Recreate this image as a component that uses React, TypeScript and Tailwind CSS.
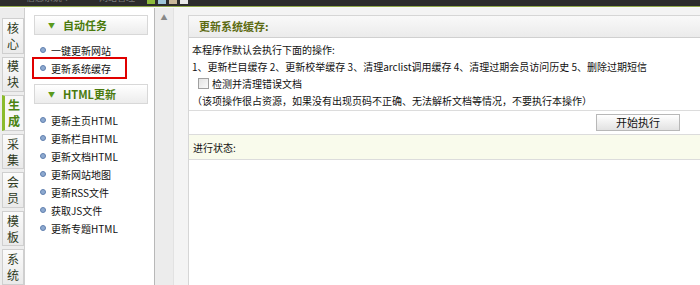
import React from "react";

const tabs = [
  { t: "核心", active: false },
  { t: "模块", active: false },
  { t: "生成", active: true },
  { t: "采集", active: false },
  { t: "会员", active: false },
  { t: "模板", active: false },
  { t: "系统", active: false },
];

function Bullet() {
  return (
    <span className="inline-block w-[6px] h-[6px] rounded-full bg-[#8eaad0] border border-[#5f7fae] mr-[5px] shrink-0" />
  );
}

function Header({ text }: { text: string }) {
  return (
    <div className="ml-[9px] w-[114px] h-[20px] border border-[#d8d8d8] bg-gradient-to-b from-[#ffffff] to-[#ececec] flex items-center">
      <span className="ml-[13px] text-[7px] text-[#5b9a1c] leading-none">▼</span>
      <span className="ml-[8px] font-bold text-[11px] text-[#4a7a0c]">{text}</span>
    </div>
  );
}

function Item({ text, boxed }: { text: string; boxed?: boolean }) {
  return (
    <div className="h-[18px] flex items-center pl-[15px] relative">
      <Bullet />
      <span className="text-[10px] text-[#111]">{text}</span>
      {boxed && (
        <div className="absolute left-[7px] top-[-2px] w-[95px] h-[22px] border-2 border-[#e00000]" />
      )}
    </div>
  );
}

export default function App() {
  return (
    <div
      className="w-[700px] h-[285px] overflow-hidden bg-[#f4f4f4] flex flex-col"
      style={{ fontFamily: '"Noto Sans CJK SC", "Liberation Sans", sans-serif' }}
    >
      {/* top bar */}
      <div className="h-[6px] bg-[#2c2c2c] relative overflow-hidden shrink-0">
        <div className="absolute left-[26px] top-[-7px] flex gap-[28px] text-[9px] leading-[10px] text-[#7a7a7a]">
          <span>信息系统▼</span>
          <span>网站管理</span>
        </div>
        <div className="absolute left-[147px] top-[0px] flex gap-[3px]">
          <span className="w-[8px] h-[4px] bg-[#8dbb3a]" />
          <span className="w-[8px] h-[4px] bg-[#9ec5d8]" />
          <span className="w-[8px] h-[4px] bg-[#c9b89a]" />
          <span className="w-[8px] h-[4px] bg-[#e8e8e8]" />
        </div>
      </div>
      <div className="h-[1px] bg-[#8fa84a] shrink-0" />
      <div className="h-[1px] bg-[#f8f8f8] shrink-0" />

      <div className="flex flex-1 min-h-0">
        {/* tabs */}
        <div className="w-[25px] bg-[#ededed] flex flex-col gap-[3px] pt-[10px] pl-[2px] border-r border-[#cfcfcf]">
          {tabs.map((tb) => (
            <div
              key={tb.t}
              className={
                "w-[22px] h-[36px] border border-[#cfcfcf] flex flex-col items-center justify-center text-[12px] leading-[16px] " +
                (tb.active
                  ? "bg-[#f7f7f7] border-l-[3px] border-l-[#8bbb2c] text-[#4a8410] font-bold"
                  : "bg-gradient-to-b from-[#fbfbfb] to-[#eaeaea] text-[#2e3a1c]")
              }
            >
              <span className="block h-[16px]">{tb.t[0]}</span>
              <span className="block h-[16px]">{tb.t[1]}</span>
            </div>
          ))}
        </div>

        {/* menu */}
        <div className="w-[130px] bg-white border-r border-[#b8b8b8] pt-[7px]">
          <Header text="自动任务" />
          <div className="pt-[6px] pb-[7px]">
            <Item text="一键更新网站" />
            <Item text="更新系统缓存" boxed />
          </div>
          <Header text="HTML更新" />
          <div className="pt-[7px]">
            <Item text="更新主页HTML" />
            <Item text="更新栏目HTML" />
            <Item text="更新文档HTML" />
            <Item text="更新网站地图" />
            <Item text="更新RSS文件" />
            <Item text="获取JS文件" />
            <Item text="更新专题HTML" />
          </div>
        </div>

        {/* scroll column */}
        <div className="w-[19px] bg-[#ececec] border-r border-[#e2e2e2] flex justify-center pt-[6px]">
          <span className="text-[7px] text-[#888] leading-none">▲</span>
        </div>
        <div className="w-[14px] bg-[#f4f4f4]" />

        {/* content */}
        <div className="flex-1 pt-[7px] flex flex-col">
          <div className="flex-1 bg-white border-l border-t border-[#d6d6d6] flex flex-col">
            <div className="h-[22px] bg-gradient-to-b from-[#f9f9f9] to-[#ebebeb] border-b border-[#d0d0d0] flex items-center pl-[10px]">
              <span className="font-bold text-[11px] text-[#5d6b12]">更新系统缓存:</span>
            </div>
            <div className="pl-[3px] pt-[3px] text-[10px] text-[#111] leading-[17px] whitespace-nowrap">
              <div>本程序作默认会执行下面的操作:</div>
              <div>1、更新栏目缓存 2、更新校举缓存 3、清理arclist调用缓存 4、清理过期会员访问历史 5、删除过期短信</div>
              <div className="flex items-center pl-[6px]">
                <span className="w-[11px] h-[11px] border border-[#a0a0a0] bg-gradient-to-br from-[#e3e3e3] to-[#fafafa] mr-[3px]" />
                <span>检测并清理错误文档</span>
              </div>
              <div>（该项操作很占资源，如果没有出现页码不正确、无法解析文档等情况，不要执行本操作）</div>
            </div>
            <div className="mt-[1px] h-[25px] border-t border-b border-[#dcdcdc] flex items-center justify-end pr-[20px]">
              <button className="w-[84px] h-[17px] border border-[#b8b8b8] bg-gradient-to-b from-[#ffffff] to-[#e2e2e2] text-[11px] text-[#111] leading-none">
                开始执行
              </button>
            </div>
            <div className="h-[25px] bg-[#f9fbec] border-b border-[#dcdcdc] flex items-center pl-[4px] text-[10px] text-[#111]">
              进行状态:
            </div>
            <div className="flex-1 bg-white" />
          </div>
        </div>
      </div>
    </div>
  );
}
